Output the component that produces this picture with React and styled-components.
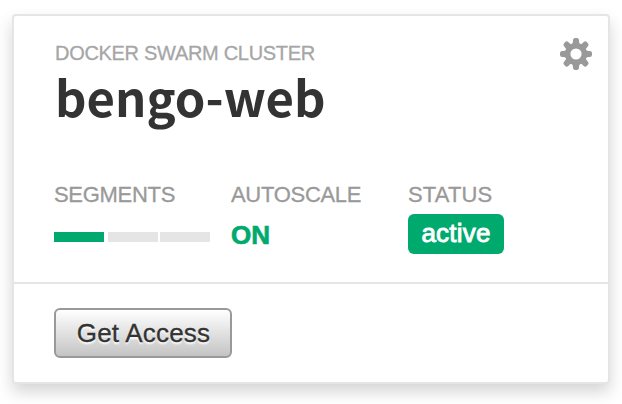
import React from "react";
import styled, { createGlobalStyle } from 'styled-components';

const GlobalStyle = createGlobalStyle`
    * {
        box-sizing: border-box;
    }
    body {
        margin: 0;
        background-color: #fff;
        font-family: "Liberation Sans", Arial, sans-serif;
        overflow: hidden;
    }
`;

const Page = styled.div`
    width: 622px;
    height: 404px;
    padding: 14px 12px 20px;
    overflow: hidden;
`;

const Card = styled.div`
    width: 598px;
    height: 370px;
    border: 2px solid #e5e5e5;
    border-radius: 4px;
    background-color: #fff;
    box-shadow: 0 8px 16px rgba(0, 0, 0, 0.17);
`;

const CardBody = styled.div`
    height: 268px;
    padding: 22px 16px 0 40px;
    border-bottom: 2px solid #e5e5e5;
`;

const CardFooter = styled.div`
    padding: 24px 40px;
`;

const Header = styled.div`
    display: flex;
    justify-content: space-between;
    height: 142px;
`;

const Kind = styled.div`
    height: 30px;
    line-height: 30px;
    padding-left: 1px;
    font-size: 20px;
    letter-spacing: -0.3px;
    color: #a6a6a6;
    -webkit-text-stroke: 0.3px #a6a6a6;
    white-space: nowrap;
`;

const Name = styled.h1`
    margin: 0;
    height: 56px;
    line-height: 56px;
    padding-left: 1px;
    font-family: "Noto Sans CJK SC", sans-serif;
    font-size: 49px;
    font-weight: 700;
    color: #333;
    white-space: nowrap;
`;

const Settings = styled.svg`
    width: 32px;
    height: 32px;
    fill: #999;
`;

const Stats = styled.div`
    display: grid;
    grid-template-columns: 177px 177px auto;
`;

const Label = styled.div`
    height: 28px;
    line-height: 29px;
    font-size: 22px;
    letter-spacing: ${props => props.$wide ? '0.15px' : '-0.3px'};
    color: #999;
    -webkit-text-stroke: 0.3px #999;
`;

const Segments = styled.div`
    display: grid;
    grid-template-columns: 50px 50px 50px;
    column-gap: 4px;
    margin-top: 24px;
`;

const Segment = styled.div`
    height: 10px;
    background-color: ${props => props.$on ? '#00aa6e' : '#e5e5e5'};

    &:last-child {
        margin: 0 -2px 0 -2px;
        width: 50px;
    }
`;

const Autoscale = styled.div`
    margin-top: 12px;
    line-height: 30px;
    font-size: 26px;
    font-weight: 700;
    color: #00aa6e;
    -webkit-text-stroke: 0.7px #00aa6e;
`;

const Badge = styled.span`
    display: inline-block;
    width: 96px;
    height: 40px;
    margin-top: 6px;
    line-height: 38px;
    border-radius: 6px;
    background-color: #00aa6e;
    color: #fff;
    font-size: 26px;
    letter-spacing: 0.2px;
    text-align: center;
    -webkit-text-stroke: 0.9px #fff;
`;

const Button = styled.button`
    display: block;
    width: 178px;
    height: 50px;
    padding: 0 0 0 1px;
    border: 2px solid #999;
    border-radius: 6px;
    background: linear-gradient(#fff, #c4c4c4);
    font-family: inherit;
    font-size: 26px;
    letter-spacing: 0.2px;
    line-height: 46px;
    color: #333;
    -webkit-text-stroke: 0.3px #333;
    text-shadow: 0 2px 2px #fff;
`;

const teeth = [0, 45, 90, 135, 180, 225, 270, 315];

const Gear = () => (
    <Settings viewBox="0 0 32 32">
        <path fillRule="evenodd" d="M16 5a11 11 0 1 0 0 22a11 11 0 0 0 0-22zM16 10.4a5.6 5.6 0 1 1 0 11.2a5.6 5.6 0 0 1 0-11.2z" />
        {teeth.map(angle => (
            <path
                key={angle}
                d="M11.8 6.6Q13 5 13 3V2.2Q13 0 15.2 0H16.8Q19 0 19 2.2V3Q19 5 20.2 6.6z"
                transform={`rotate(${angle} 16 16)`}
            />
        ))}
    </Settings>
);

const App = () => (
    <Page>
        <GlobalStyle />
        <Card>
            <CardBody>
                <Header>
                    <div>
                        <Kind>DOCKER SWARM CLUSTER</Kind>
                        <Name>bengo-web</Name>
                    </div>
                    <Gear />
                </Header>
                <Stats>
                    <div>
                        <Label>SEGMENTS</Label>
                        <Segments>
                            <Segment $on />
                            <Segment />
                            <Segment />
                        </Segments>
                    </div>
                    <div>
                        <Label>AUTOSCALE</Label>
                        <Autoscale>ON</Autoscale>
                    </div>
                    <div>
                        <Label $wide>STATUS</Label>
                        <Badge>active</Badge>
                    </div>
                </Stats>
            </CardBody>
            <CardFooter>
                <Button>Get Access</Button>
            </CardFooter>
        </Card>
    </Page>
);

export default App;
